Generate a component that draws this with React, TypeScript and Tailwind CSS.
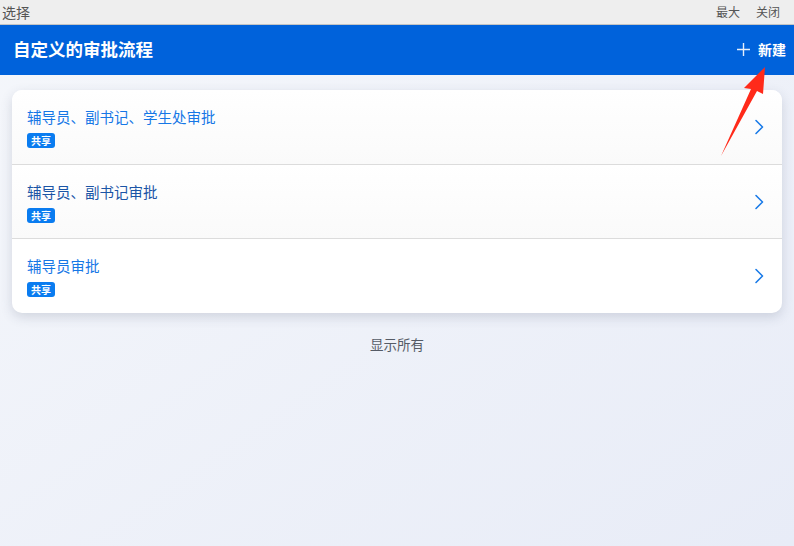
const flows = [
  { title: '辅导员、副书记、学生处审批', color: 'text-[#1677e6]' },
  { title: '辅导员、副书记审批', color: 'text-[#1b55a6]' },
  { title: '辅导员审批', color: 'text-[#1677e6]' },
];

function Chevron() {
  return (
    <svg width="10" height="16" viewBox="0 0 10 16" fill="none" className="shrink-0">
      <path d="M2 1.5 L8.5 8 L2 14.5" stroke="#1a7be8" strokeWidth="1.6" strokeLinecap="round" strokeLinejoin="round" />
    </svg>
  );
}

export default function App() {
  return (
    <div
      className="relative w-[794px] h-[546px] overflow-hidden bg-gradient-to-br from-[#f5f7fb] to-[#e8ecf7]"
      style={{ fontFamily: '"Noto Sans CJK SC", "Noto Sans", sans-serif' }}
    >
      {/* window bar */}
      <div className="h-[25px] flex items-center justify-between bg-[#eeeeee] border-b border-[#c4c4c4] pl-[2px] pr-[14px]">
        <span className="text-[14px] text-[#555]">选择</span>
        <div className="flex gap-[16px] text-[12px] text-[#555]">
          <span>最大</span>
          <span>关闭</span>
        </div>
      </div>

      {/* header */}
      <div className="h-[50px] bg-[#0062db] flex items-center justify-between pl-[13px] pr-[8px]">
        <h1 className="text-[17.5px] font-bold text-white -mt-[2px]">自定义的审批流程</h1>
        <button className="flex items-center gap-[8px] text-white -mt-[2px]">
          <svg width="13" height="13" viewBox="0 0 13 13">
            <path d="M6.5 0 V13 M0 6.5 H13" stroke="white" strokeWidth="1.4" opacity="0.9" />
          </svg>
          <span className="text-[14px] font-bold">新建</span>
        </button>
      </div>

      {/* list */}
      <div className="px-[12px] pt-[15px]">
        <div className="bg-white rounded-[10px] shadow-[0_4px_12px_rgba(60,70,100,0.18)] overflow-hidden">
          {flows.map((f, i) => (
            <div
              key={f.title}
              className={`flex items-center justify-between pl-[15px] pr-[18px] ${i === 2 ? 'h-[75px]' : 'h-[74px]'} ${i > 0 ? 'border-t border-[#dcdcdc]' : ''} ${i < 2 ? 'bg-gradient-to-b from-white to-[#fafafa]' : ''}`}
            >
              <div className="flex flex-col gap-[6px] mt-[1px]">
                <span className={`text-[14.5px] leading-[20px] ${f.color}`}>{f.title}</span>
                <span className="self-start h-[15px] px-[4px] rounded-[3px] bg-[#0a7cf0] text-white text-[10px] font-bold leading-[15px]">
                  共享
                </span>
              </div>
              <Chevron />
            </div>
          ))}
        </div>
        <p className="text-center text-[13.5px] text-[#555b66] mt-[21px]">显示所有</p>
      </div>

      {/* red annotation arrow */}
      <svg className="absolute left-0 top-0 pointer-events-none" width="794" height="546">
        <polygon points="765,67 763,94 757,91 721,156 751,89 744,88" fill="#ff2a1a" />
      </svg>
    </div>
  );
}
